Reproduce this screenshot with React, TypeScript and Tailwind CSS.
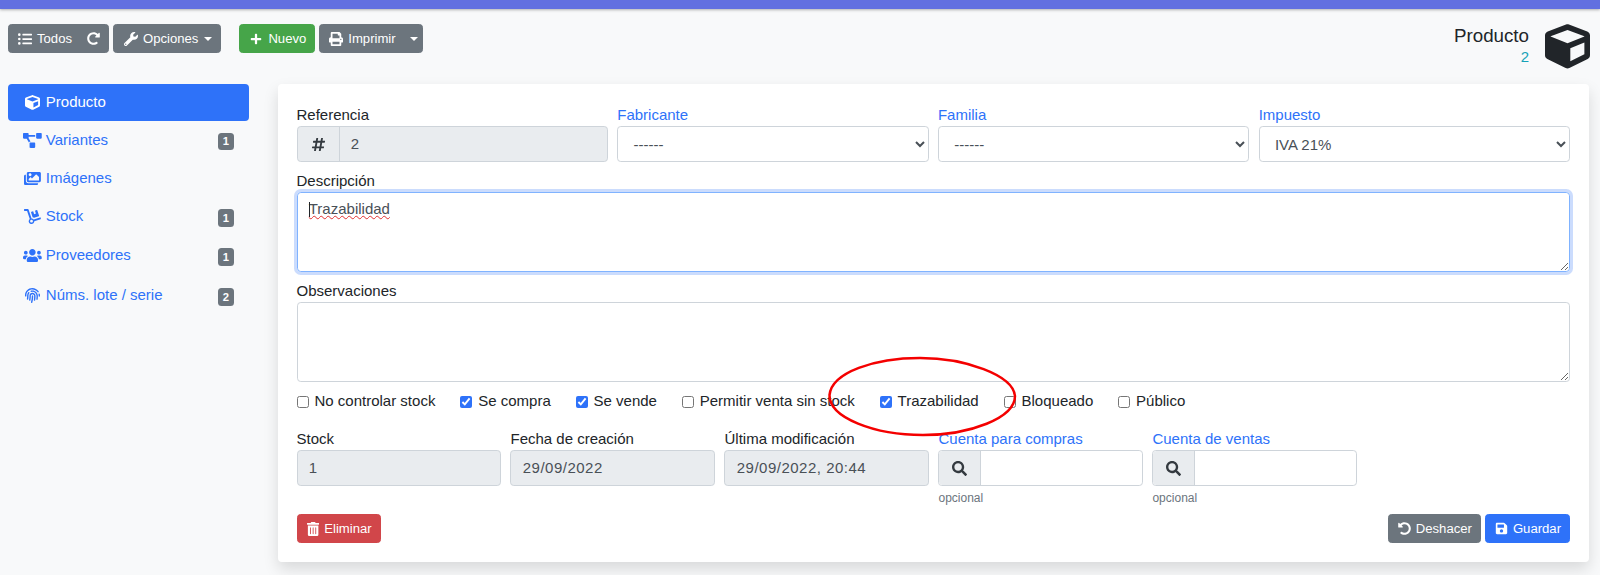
import React from "react";
import {
  FaListUl, FaRedoAlt, FaWrench, FaPlus, FaPrint, FaCube, FaProjectDiagram, FaImages, FaDolly,
  FaUsers, FaFingerprint, FaHashtag, FaSearch, FaTrashAlt, FaUndoAlt, FaSave,
} from "react-icons/fa";

const Caret = ({ className = "ml-[6px]" }: { className?: string }) => (
  <span className={`inline-block h-0 w-0 border-x-[4.5px] border-t-[4.5px] border-x-transparent border-t-white ${className}`} />
);

function Btn({ className = "bg-[#6c757d] border-[#6c757d]", children }: { className?: string; children: React.ReactNode }) {
  return (
    <div className={`flex h-[29px] items-center rounded-[3.5px] border pl-[9px] pr-[8px] text-[13.125px] text-white ${className}`}>
      {children}
    </div>
  );
}

function Nav({ icon, label, badge, active, height = "h-[37px]" }: { icon: React.ReactNode; label: string; badge?: string; active?: boolean; height?: string }) {
  return (
    <div className={`flex ${height} items-center rounded-[4px] pl-[15.3px] pr-[15px] text-[15px] ${active ? "bg-[#2e72f9] text-white" : "text-[#2e72f9]"}`}>
      <span className="mr-[3.75px] flex w-[18.75px] shrink-0 items-center justify-center">{icon}</span>
      <span>{label}</span>
      {badge && <span className="ml-auto mt-[3px] flex h-[17.5px] w-[16px] items-center justify-center rounded-[3.5px] bg-[#6c757d] text-[11.25px] font-bold text-white">{badge}</span>}
    </div>
  );
}

const Label = ({ children, link }: { children: React.ReactNode; link?: boolean }) => (
  <div className={`h-[23px] text-[15px] leading-[23px] ${link ? "text-[#2e72f9]" : "text-[#212529]"}`}>{children}</div>
);

const box = "h-[36px] rounded-[3.75px] border border-[#ced4da] text-[15px] text-[#495057]";

const Disabled = ({ value }: { value: string }) => (
  <div className={`${box} flex items-center bg-[#e9ecef] px-[11.25px] tracking-[0.5px]`}>{value}</div>
);

const Sel = ({ label, value }: { label: string; value: string }) => (
  <div className="min-w-0 flex-1">
    <Label link>{label}</Label>
    <select className={`${box} w-full bg-white pl-[11.25px] pr-[2px]`} defaultValue={value}>
      <option>{value}</option>
    </select>
  </div>
);

const Check = ({ label, checked }: { label: string; checked?: boolean }) => (
  <label className="flex items-center text-[15px] text-[#212529]">
    <input type="checkbox" readOnly checked={!!checked} className="mr-[6px] h-[12px] w-[12px] accent-[#2e72f9]" />
    {label}
  </label>
);

const SearchField = ({ label }: { label: string }) => (
  <div className="w-[204.6px]">
    <Label link>{label}</Label>
    <div className={`${box} flex bg-white`}>
      <div className="flex w-[42px] items-center justify-center rounded-l-[3.75px] border-r border-[#ced4da] bg-[#e9ecef] text-[#343a40]">
        <FaSearch size={15} />
      </div>
    </div>
    <div className="mt-[5px] h-[14px] text-[12px] leading-[14px] text-[#6c757d]">opcional</div>
  </div>
);

export default function App() {
  return (
    <div className="relative h-[575px] w-[1600px] overflow-hidden bg-[#f8f9fa] font-['Liberation_Sans',sans-serif]">
      <div className="h-[9px] bg-[#6270e0] shadow-[0_1px_3px_rgba(0,0,0,0.3)]" />

      <div className="flex h-[75px] items-start pl-[8px] pr-[10px] pt-[15px]">
        <div className="flex gap-[4px]">
          <Btn>
            <FaListUl className="mr-[5px]" size={14} />Todos
            <FaRedoAlt className="ml-[15px]" size={13} />
          </Btn>
          <Btn>
            <FaWrench className="ml-[1px] mr-[5px]" size={14} />Opciones<Caret />
          </Btn>
        </div>
        <div className="ml-[18px] flex gap-[4px]">
          <Btn className="border-[#46a549] bg-[#46a549] pl-[10px] pr-[7.5px]">
            <FaPlus className="mr-[6px]" size={12} />Nuevo
          </Btn>
          <Btn>
            <FaPrint className="mr-[5px]" size={14} />Imprimir<Caret className="-mr-[3.5px] ml-[14px]" />
          </Btn>
        </div>
        <div className="ml-auto flex items-start">
          <div className="text-right">
            <div className="text-[18.75px] leading-[24px] text-[#212529]">Producto</div>
            <div className="text-[15px] leading-[18px] text-[#17a2b8]">2</div>
          </div>
          <FaCube className="ml-[16px] text-[#212529]" size={45} />
        </div>
      </div>

      <div className="flex items-start pl-[8px]">
        <div className="flex w-[241px] flex-col">
          <Nav active icon={<FaCube size={15} />} label="Producto" />
          <Nav height="h-[38px]" icon={<FaProjectDiagram className="h-[15px] w-[18.75px]" />} label="Variantes" badge="1" />
          <Nav height="h-[39px]" icon={<FaImages className="h-[15px] w-[16.9px]" />} label="Imágenes" />
          <Nav icon={<FaDolly className="h-[15px] w-[16.9px]" />} label="Stock" badge="1" />
          <Nav height="h-[41px]" icon={<FaUsers className="h-[15px] w-[18.75px]" />} label="Proveedores" badge="1" />
          <Nav height="h-[39px]" icon={<FaFingerprint size={15} />} label="Núms. lote / serie" badge="2" />
        </div>

        <div className="ml-[29px] h-[478px] w-[1310.5px] rounded-[4px] bg-white px-[18.5px] pt-[19px] shadow-[0_7px_15px_rgba(0,0,0,0.13)]">
          <div className="flex gap-[9.4px]">
            <div className="min-w-0 flex-1">
              <Label>Referencia</Label>
              <div className={`${box} flex bg-[#e9ecef]`}>
                <div className="flex w-[42px] items-center justify-center border-r border-[#ced4da] text-[#343a40]">
                  <FaHashtag size={15} />
                </div>
                <div className="flex items-center pl-[11.25px]">2</div>
              </div>
            </div>
            <Sel label="Fabricante" value="------" />
            <Sel label="Familia" value="------" />
            <Sel label="Impuesto" value="IVA 21%" />
          </div>

          <div className="mt-[6.5px]">
            <Label>Descripción</Label>
          </div>
          <div className="relative">
            <textarea
              readOnly
              spellCheck={false}
              defaultValue="Trazabilidad"
              className="block h-[80.5px] w-full rounded-[3.75px] border border-[#80b3ff] px-[11.25px] py-[5.6px] text-[15px] leading-[22.5px] text-[#495057] underline decoration-[#e03030] decoration-wavy decoration-[1px] underline-offset-[1px] shadow-[0_0_0_3px_rgba(46,114,249,0.25)] outline-none"
            />
            <span className="absolute left-[12px] top-[10px] h-[15px] w-px bg-[#212529]" />
          </div>

          <div className="mt-[7px]">
            <Label>Observaciones</Label>
          </div>
          <textarea
            readOnly
            spellCheck={false}
            className="block h-[80px] w-full rounded-[3.75px] border border-[#ced4da] px-[11.25px] py-[5.6px] text-[15px] outline-none"
          />

          <div className="mt-[9px] flex h-[21px] gap-[24.8px]">
            <Check label="No controlar stock" />
            <Check label="Se compra" checked />
            <Check label="Se vende" checked />
            <Check label="Permitir venta sin stock" />
            <Check label="Trazabilidad" checked />
            <Check label="Bloqueado" />
            <Check label="Público" />
          </div>

          <div className="mt-[15px] flex gap-[9.4px]">
            <div className="w-[204.6px]"><Label>Stock</Label><Disabled value="1" /></div>
            <div className="w-[204.6px]"><Label>Fecha de creación</Label><Disabled value="29/09/2022" /></div>
            <div className="w-[204.6px]"><Label>Última modificación</Label><Disabled value="29/09/2022, 20:44" /></div>
            <SearchField label="Cuenta para compras" />
            <SearchField label="Cuenta de ventas" />
          </div>

          <div className="mt-[9px] flex items-center">
            <Btn className="border-[#d1464a] bg-[#d1464a]">
              <FaTrashAlt className="mr-[5.5px] h-[14px] w-[12.25px]" />Eliminar
            </Btn>
            <div className="ml-auto flex gap-[4px]">
              <Btn>
                <FaUndoAlt className="mr-[5px]" size={13} />Deshacer
              </Btn>
              <Btn className="border-[#2e72f9] bg-[#2e72f9]">
                <FaSave className="mr-[5px]" size={13} />Guardar
              </Btn>
            </div>
          </div>
        </div>
      </div>

      <svg className="pointer-events-none absolute left-[820px] top-[350px]" width="205" height="95" viewBox="0 0 205 95" fill="none">
        <path d="M9.5 45 C 12 22, 55 8, 100 8 C 145 8, 193 25, 195 46 C 195 68, 150 85, 103 85 C 55 85, 9 68, 9.5 45 Z" stroke="#f40000" strokeWidth="2.5" />
      </svg>
    </div>
  );
}
